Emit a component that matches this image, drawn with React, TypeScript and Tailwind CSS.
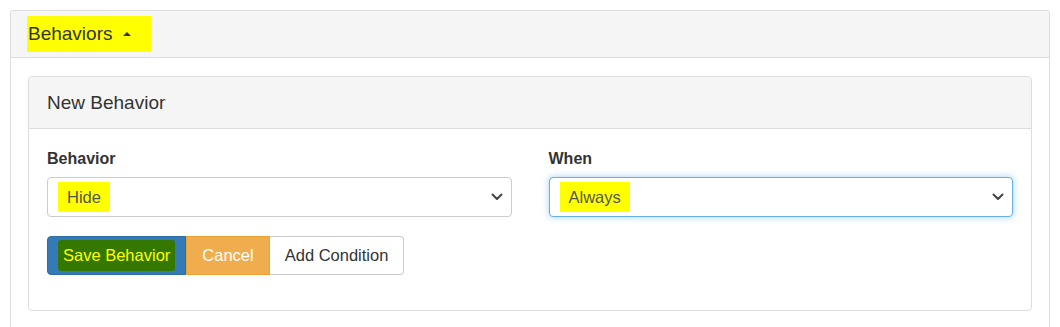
import React from "react";

function Chevron() {
  return (
    <svg width="12" height="8" viewBox="0 0 12 8" className="shrink-0">
      <path d="M1.5 1.5 L6 6 L10.5 1.5" fill="none" stroke="#444" strokeWidth="2" strokeLinecap="round" strokeLinejoin="round" />
    </svg>
  );
}

function Select({ value, focused }: { value: string; focused?: boolean }) {
  return (
    <div
      className={
        "flex h-[40px] items-center justify-between rounded-[4px] border bg-white pl-[10px] pr-[8px] " +
        (focused
          ? "border-[#66afe9] shadow-[0_0_7px_rgba(102,175,233,0.6)]"
          : "border-[#cccccc]")
      }
    >
      <span className="bg-[#ffff00] px-[9px] py-[4px] text-[16.5px] leading-[22px] text-[#555555]">{value}</span>
      <Chevron />
    </div>
  );
}

export default function App() {
  return (
    <div className="min-h-[327px] bg-white px-[10px] pt-[10px] font-['Liberation_Sans',Arial,sans-serif] text-[#333333]">
      <div className="rounded-t-[4px] border border-[#dddddd] border-b-0">
        <div className="flex h-[47px] items-center rounded-t-[4px] border-b border-[#dddddd] bg-[#f5f5f5] px-[16px]">
          <span className="flex items-center bg-[#ffff00] py-[7px] pl-[1px] pr-[20px]">
            <span className="text-[19px] leading-[22px] text-[#333333]">Behaviors</span>
            <span className="ml-[10px] h-0 w-0 border-x-[4px] border-b-[4px] border-x-transparent border-b-[#333333]" />
          </span>
        </div>
        <div className="px-[17px] pt-[18px] pb-[20px]">
          <div className="rounded-[4px] border border-[#dddddd] bg-white">
            <div className="flex h-[52px] items-center rounded-t-[4px] border-b border-[#dddddd] bg-[#f5f5f5] px-[18px]">
              <span className="text-[19px] leading-[22px] text-[#333333]">New Behavior</span>
            </div>
            <div className="px-[18px] pt-[20px] pb-[35px]">
              <div className="grid grid-cols-2 gap-x-[37px]">
                <div>
                  <div className="mb-[8px] text-[16px] font-bold leading-[20px] text-[#333333]">Behavior</div>
                  <Select value="Hide" />
                </div>
                <div>
                  <div className="mb-[8px] text-[16px] font-bold leading-[20px] text-[#333333]">When</div>
                  <Select value="Always" focused />
                </div>
              </div>
              <div className="mt-[19px] flex">
                <button className="flex h-[39px] items-center rounded-l-[4px] border border-[#2e6da4] bg-[#337ab7] px-[10px]">
                  <span className="rounded-[3px] bg-[#347800] px-[5px] py-[5px] text-[16.5px] leading-[21px] text-[#ffff00]">Save Behavior</span>
                </button>
                <button className="h-[39px] border border-[#eea236] bg-[#f0ad4e] px-[15px] text-[16.5px] text-white">Cancel</button>
                <button className="h-[39px] rounded-r-[4px] border border-l-0 border-[#cccccc] bg-white px-[15px] text-[16.5px] text-[#333333]">Add Condition</button>
              </div>
            </div>
          </div>
        </div>
      </div>
    </div>
  );
}
